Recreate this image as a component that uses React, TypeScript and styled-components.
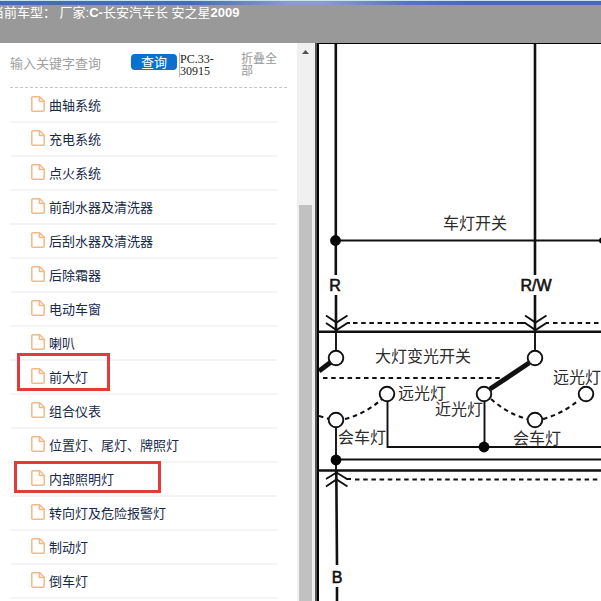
import React from "react";
import styled, { createGlobalStyle } from "styled-components";

const GlobalStyle = createGlobalStyle`
  * { box-sizing: border-box; }
  body {
    margin: 0;
    background: #fff;
    font-family: "Liberation Sans", "Noto Sans CJK SC", sans-serif;
    font-size: 13px;
  }
`;

const Page = styled.div`
  display: flex;
  flex-direction: column;
  height: 100vh;
  overflow: hidden;
`;

const TopStrip = styled.div`
  flex: none;
  height: 5px;
  border-top: 1px solid #c4e4f6;
  background: linear-gradient(90deg, #466cb4 0%, #466cb4 32%, #8c98d8 48%, #8c98d8 54%, #5872c0 68%, #4a68b4 78%, #4a68b4 100%);
`;

const Header = styled.header`
  flex: none;
  height: 38px;
  background: #999;
  color: #fff;
  line-height: 16px;
  white-space: nowrap;
  overflow: hidden;
`;

const VehicleTitle = styled.div`
  margin-left: -9px;
  white-space: pre;
`;

const Main = styled.div`
  flex: 1;
  min-height: 0;
  display: flex;
`;

const Sidebar = styled.aside`
  flex: none;
  width: 297px;
  padding-left: 10px;
  overflow: hidden;
`;

const SearchBar = styled.form`
  display: flex;
  align-items: flex-start;
  height: 45px;
  margin-right: 10px;
  padding-top: 10px;
  border-bottom: 1px dashed #c4c4c4;
`;

const KeywordInput = styled.input`
  width: 121px;
  height: 20px;
  padding: 0;
  border: 0;
  outline: 0;
  background: transparent;
  font: inherit;
  color: #333;
  &::placeholder { color: #a0a0a0; opacity: 1; }
`;

const SearchButton = styled.button`
  width: 46px;
  height: 16px;
  margin-top: 1px;
  padding: 0;
  border: 0;
  border-radius: 4px;
  background: #0972ce;
  color: #fff;
  font: inherit;
  line-height: 15px;
`;

const PartCode = styled.span`
  width: 46px;
  margin-left: 2px;
  border-left: 1px solid #bbb;
  font-family: "Liberation Serif", serif;
  font-size: 12px;
  line-height: 12px;
  color: #222;
`;

const CollapseLink = styled.a`
  width: 38px;
  margin-left: 16px;
  font-size: 12px;
  line-height: 12px;
  color: #999;
  text-decoration: none;
`;

const SystemList = styled.ul`
  margin: 1px 20px 0 0;
  padding: 0;
  list-style: none;
`;

const SystemItem = styled.li`
  position: relative;
  height: 34px;
  border-bottom: 2px solid #f4f4f4;
`;

const SystemLink = styled.a`
  display: flex;
  align-items: center;
  gap: 4px;
  height: 30px;
  padding-left: 21px;
  color: #16294a;
  text-decoration: none;
  white-space: nowrap;
`;

const Highlight = styled.span<{ $left: number; $top: number; $width: number; $height: number }>`
  position: absolute;
  z-index: 1;
  left: ${(p) => p.$left}px;
  top: ${(p) => p.$top}px;
  width: ${(p) => p.$width}px;
  height: ${(p) => p.$height}px;
  border: 3px solid #e33b3b;
  pointer-events: none;
`;

const Scrollbar = styled.div`
  flex: none;
  width: 18px;
  display: grid;
  grid-template-rows: 162px 1fr;
  padding: 0 3px 0 2px;
  background: #f0f0f0;
`;

const ScrollArrow = styled.svg`
  display: block;
  width: 13px;
  height: 17px;
`;

const ScrollThumb = styled.div`
  background: #c1c1c1;
`;

const DiagramPane = styled.main`
  flex: 1;
  min-width: 0;
  overflow: hidden;
  border-left: 2px solid #555;
`;

const Diagram = styled.svg`
  display: block;
  width: 100%;
  height: 100%;
  border-left: 2px solid #000;
  border-top: 1px solid #000;
  background: #fff;
`;

const DiagramText = styled.text`
  font-family: "Noto Sans CJK SC", sans-serif;
  font-size: 16px;
  fill: #2c2c2c;
`;

const WireText = styled.text`
  font-family: "Liberation Sans", sans-serif;
  font-size: 16px;
  text-anchor: middle;
  fill: #111;
  stroke: #111;
  stroke-width: 0.6;
`;

type Box = { left: number; top: number; width: number; height: number };

const systems: { name: string; box?: Box }[] = [
  { name: "曲轴系统" },
  { name: "充电系统" },
  { name: "点火系统" },
  { name: "前刮水器及清洗器" },
  { name: "后刮水器及清洗器" },
  { name: "后除霜器" },
  { name: "电动车窗" },
  { name: "喇叭" },
  { name: "前大灯", box: { left: 7, top: -8, width: 93, height: 38 } },
  { name: "组合仪表" },
  { name: "位置灯、尾灯、牌照灯" },
  { name: "内部照明灯", box: { left: 4, top: -2, width: 147, height: 32 } },
  { name: "转向灯及危险报警灯" },
  { name: "制动灯" },
  { name: "倒车灯" },
];

const FileIcon = () => (
  <svg width="14" height="16" viewBox="0 0 14 16" fill="none" stroke="#f3b985" strokeWidth="1.5" strokeLinejoin="round" aria-hidden="true">
    <path d="M1.8.8h6.9l4.5 4.5v8.9a1 1 0 0 1-1 1H1.8a1 1 0 0 1-1-1V1.8a1 1 0 0 1 1-1Z" />
    <path d="M8.4 1v4.6h4.6" />
  </svg>
);

const labels: [number, number, string][] = [
  [443, 229, "车灯开关"],
  [375, 362, "大灯变光开关"],
  [398, 399, "远光灯"],
  [435, 415, "近光灯"],
  [338, 443, "会车灯"],
  [553, 383, "远光灯"],
  [513, 444, "会车灯"],
];

const terminals = [
  [336, 358], [535, 358], [387, 394], [484, 394], [586, 394], [336, 420], [535, 420],
];

const WiringDiagram = () => (
  <Diagram viewBox="319 44 282 557" preserveAspectRatio="xMinYMin slice" role="img" aria-label="车灯开关">
    <g fill="none" stroke="#111">
      <g strokeWidth="2.6">
        <path d="M335.8 44V275M336 295V332M535 44V275M535 295V332" />
        <path d="M319 331.7H601M319 470.5H601" />
        <path d="M336.3 471L337 565M337 587V601" />
      </g>
      <g strokeWidth="1.9">
        <path d="M336 240.5H601M336 331V351M535 331V351M336 427V472M336 459.5H601" />
        <path d="M387.5 401V447H601M484.5 401V447" />
        <path d="M326 315.5L336.5 322.5L347.5 315.5M326 323L336.5 330L347.5 323H350" />
        <path d="M525 315.5L535.5 322.5L546.5 315.5M521 323H525L535.5 330L546.5 323H549" />
        <path d="M326 479L336.5 472.5L347 479H351M326 486.5L336.5 479.5L347.5 486.5" />
      </g>
      <g strokeWidth="2.1" strokeDasharray="4.5 3.7">
        <path d="M353 323H521M553 323H601M323 378H503M355 479.5H601" />
        <path d="M345 419Q365 414 382 399M319 416L329 419" />
        <path d="M491 399Q508 414 527 419M543 419Q562 414 579 400" />
      </g>
      <path d="M319 371L331 362M529 363L490 389" strokeWidth="5" />
      <g fill="#fff" strokeWidth="1.9">
        {terminals.map(([x, y]) => <circle key={`${x}-${y}`} cx={x} cy={y} r="7.3" />)}
      </g>
    </g>
    <g fill="#080808">
      <circle cx="335.5" cy="240.5" r="5.4" />
      <circle cx="336" cy="460" r="5.4" />
      <circle cx="484" cy="447" r="5.4" />
      <circle cx="602" cy="240.5" r="3" />
    </g>
    {labels.map(([x, y, text]) => <DiagramText key={`${x}-${y}`} x={x} y={y}>{text}</DiagramText>)}
    <WireText x="335" y="291">R</WireText>
    <WireText x="536" y="291">R/W</WireText>
    <WireText x="337" y="583">B</WireText>
  </Diagram>
);

export default function App() {
  return (
    <>
      <GlobalStyle />
      <Page>
        <TopStrip />
        <Header>
          <VehicleTitle>当前车型： 厂家:<b>C-</b>长安汽车长 安之星<b>2009</b></VehicleTitle>
        </Header>
        <Main>
          <Sidebar>
            <SearchBar onSubmit={(e) => e.preventDefault()}>
              <KeywordInput type="text" placeholder="输入关键字查询" aria-label="输入关键字查询" />
              <SearchButton type="submit">查询</SearchButton>
              <PartCode>PC.33-30915</PartCode>
              <CollapseLink href="#">折叠全部</CollapseLink>
            </SearchBar>
            <SystemList>
              {systems.map(({ name, box }) => (
                <SystemItem key={name}>
                  <SystemLink href="#"><FileIcon />{name}</SystemLink>
                  {box && <Highlight $left={box.left} $top={box.top} $width={box.width} $height={box.height} />}
                </SystemItem>
              ))}
            </SystemList>
          </Sidebar>
          <Scrollbar>
            <ScrollArrow viewBox="0 0 13 17" aria-hidden="true"><path d="M3 11L6.5 7L10 11Z" fill="#505050" /></ScrollArrow>
            <ScrollThumb />
          </Scrollbar>
          <DiagramPane><WiringDiagram /></DiagramPane>
        </Main>
      </Page>
    </>
  );
}
